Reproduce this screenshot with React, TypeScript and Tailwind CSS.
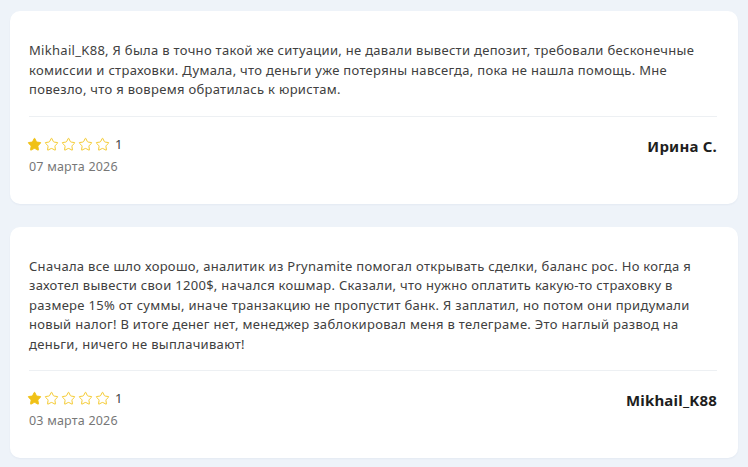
import { Star } from "lucide-react";

type Review = {
  text: string;
  rating: number;
  date: string;
  author: string;
};

const reviews: Review[] = [
  {
    text: "Mikhail_K88, Я была в точно такой же ситуации, не давали вывести депозит, требовали бесконечные комиссии и страховки. Думала, что деньги уже потеряны навсегда, пока не нашла помощь. Мне повезло, что я вовремя обратилась к юристам.",
    rating: 1,
    date: "07 марта 2026",
    author: "Ирина С.",
  },
  {
    text: "Сначала все шло хорошо, аналитик из Prynamite помогал открывать сделки, баланс рос. Но когда я захотел вывести свои 1200$, начался кошмар. Сказали, что нужно оплатить какую-то страховку в размере 15% от суммы, иначе транзакцию не пропустит банк. Я заплатил, но потом они придумали новый налог! В итоге денег нет, менеджер заблокировал меня в телеграме. Это наглый развод на деньги, ничего не выплачивают!",
    rating: 1,
    date: "03 марта 2026",
    author: "Mikhail_K88",
  },
];

const Stars = ({ rating }: { rating: number }) => (
  <div className="flex h-[15px] items-center gap-[2px] -ml-[2px]">
    {[1, 2, 3, 4, 5].map((i) => (
      <Star
        key={i}
        size={15}
        strokeWidth={1.5}
        className={i <= rating ? "text-[#f0c116] fill-[#f0c116]" : "text-[#f3c623]"}
      />
    ))}
    <span className="ml-[3px] text-[13px] leading-[15px] text-[#444]">{rating}</span>
  </div>
);

const ReviewCard = ({ review }: { review: Review }) => (
  <article className="rounded-[10px] bg-white pl-[19px] pr-[21px] pt-[30px] pb-[29px] shadow-[0_1px_2px_rgba(30,60,110,0.05)]">
    <p className="text-[13px] leading-[19.5px] tracking-[0.3px] text-[#404040]">{review.text}</p>
    <div className="mt-[16px] border-t border-[#edf0f3] pt-[20px] flex items-start justify-between">
      <div className="flex flex-col gap-[7px]">
        <Stars rating={review.rating} />
        <span className="text-[12.5px] leading-[16px] tracking-[0.2px] text-[#777]">{review.date}</span>
      </div>
      <span className="text-[15px] leading-[18px] font-bold text-[#1e1e1e] tracking-[0.2px]">{review.author}</span>
    </div>
  </article>
);

export default function App() {
  return (
    <div
      className="min-h-[467px] bg-[#eef3f9] px-[10px] pt-[11px] pb-[8px] flex flex-col gap-[23px]"
      style={{ fontFamily: '"Noto Sans", "Open Sans", sans-serif' }}
    >
      {reviews.map((r) => (
        <ReviewCard key={r.date} review={r} />
      ))}
    </div>
  );
}
